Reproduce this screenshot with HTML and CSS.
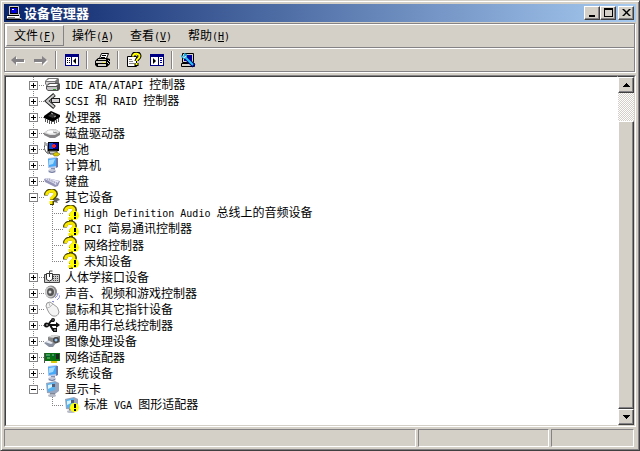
FILE: index.html
```html
<!DOCTYPE html>
<html lang="zh-CN">
<head>
  <meta charset="UTF-8">
  <meta name="viewport" content="width=device-width, initial-scale=1.0">
  <title>设备管理器</title>
  <link rel="stylesheet" href="styles.css">
</head>
<body>

  <!-- icon set, 16x16 -->
  <svg class="sprites" aria-hidden="true">
    <symbol id="i-app" viewBox="0 0 16 16">
      <path d="M3.500 1.500h9v8h-9z" fill="#d4d0c8" stroke="#d4d0c8"/>
      <path d="M4 2h8v7H4z" fill="#000"/><path d="M5 3h6v5H5z" fill="#0000e0"/><path d="M6 4h2v1H6z" fill="#fff"/>
      <path d="M2 10h11v1H2z" fill="#000"/><path d="M1 11h12v2H1z" fill="#fff"/><path d="M1 13h14v1H1z" fill="#848284"/><path d="M0 14h15v1H0z" fill="#000"/>
      <path d="M2 12h7v1H2z" fill="#848284"/><path d="M13.500 9v4l2 1" fill="none" stroke="#d4d0c8"/>
    </symbol>
    <symbol id="i-back" viewBox="0 0 16 16">
      <path d="M2 9l5-4v3h8v3H7v3z" fill="#fff"/>
      <path d="M1 8l5-4v3h8v3H6v3z" fill="#848284"/>
    </symbol>
    <symbol id="i-forward" viewBox="0 0 16 16">
      <path d="M15 9l-5-4v3H2v3h8v3z" fill="#fff"/>
      <path d="M14 8L9 4v3H1v3h8v3z" fill="#848284"/>
    </symbol>
    <symbol id="i-tree" viewBox="0 0 16 16">
      <path d="M1 2h14v12H1z" fill="#000084"/><path d="M2 5h5v8H2zM8 5h6v8H8z" fill="#fff"/>
      <path d="M3 6h1v1H3zM5 6h1v1H5zM3 8h1v1H3zM5 8h1v1H5zM3 10h1v1H3zM5 10h1v1H5z" fill="#000"/>
      <path d="M12 6v6L9 9z" fill="#000"/>
    </symbol>
    <symbol id="i-pane" viewBox="0 0 16 16">
      <path d="M1 2h14v12H1z" fill="#000084"/><path d="M2 5h7v8H2zM10 5h4v8h-4z" fill="#fff"/>
      <path d="M11 6h2v1h-2zM11 8h2v1h-2zM11 10h2v1h-2z" fill="#000084"/>
      <path d="M4 6v6l3-3z" fill="#000"/>
    </symbol>
    <symbol id="i-print" viewBox="0 0 16 16">
      <path d="M4.500 6.500l2-5h7l-2 5z" fill="#fff" stroke="#000"/>
      <path d="M7 3.500h4M6 5.500h4" stroke="#000"/>
      <path d="M0 9l3-3h9l3 1v5l-3 3H2l-2-2z" fill="#000"/>
      <path d="M3 7h8v1H3zM1 9h10v2H1z" fill="#d4d0c8"/><path d="M3 12h8v2H3z" fill="#d4d0c8"/><path d="M8 10h2v1H8z" fill="#ff0"/>
      <path d="M13 8h1v1h-1zM12 10h1v1h-1zM13 11h1v1h-1zM14 9h1v1h-1z" fill="#d4d0c8"/>
    </symbol>
    <symbol id="i-help" viewBox="0 0 16 16">
      <path d="M1.500 4.500h9v10h-9z" fill="#fff" stroke="#000"/>
      <path d="M3 7.500h3M3 9.500h4M3 11.500h5" stroke="#848284"/>
      <path d="M7 4.500C7 0 13.500 0 13.500 4c0 3-3 2.500-3 5M10.500 11v3" fill="none" stroke="#000" stroke-width="4"/>
      <path d="M7 4.500C7 1 13.500 1 13.500 4c0 3-3 2.500-3 5M10.500 11v2" fill="none" stroke="#ff0" stroke-width="2"/>
    </symbol>
    <symbol id="i-scan" viewBox="0 0 16 16">
      <path d="M2.500 1.500h11v9h-11z" fill="#d4d0c8" stroke="#000"/><path d="M4 3h8v6H4z" fill="#0000a0"/>
      <path d="M1.500 11.500h13v3h-13z" fill="#d4d0c8" stroke="#000"/>
      <path d="M4 4l10 10" stroke="#000084" stroke-width="4"/>
      <path d="M4 4l9 9" stroke="#20c8f8" stroke-width="2"/><path d="M1 3l3 1V1l3 1v4L4 7 1 5z" fill="#20a8d8"/><path d="M2 4l2 1 2-1v1L4 6z" fill="#fff"/>
    </symbol>
    <symbol id="i-ide" viewBox="0 0 16 16">
      <path d="M1 4l3-3h10l1 1v5l-2 2H3L1 7z" fill="#777"/><path d="M2 4l3-2h8l-2 2z" fill="#fff"/><path d="M2 5h9v3H3L2 7z" fill="#d6d3d6"/>
      <path d="M2 9l3-3h10l1 1v5l-2 2H4l-2-2z" fill="#555"/><path d="M3 9l3-2h8l-2 2z" fill="#fff"/><path d="M3 10h10v3H4l-1-1z" fill="#c6c3c6"/><path d="M9 12h3v1H9z" fill="#393"/>
    </symbol>
    <symbol id="i-scsi" viewBox="0 0 16 16">
      <path d="M10.500 1.500L3 8l7.500 6.500" fill="none" stroke="#222" stroke-width="4"/>
      <path d="M10 2L3 8l7 6" fill="none" stroke="#ccc" stroke-width="2"/>
      <path d="M7 5h9v5H7z" fill="#222"/><path d="M8 6h7v3H8z" fill="#d6d3d6"/>
    </symbol>
    <symbol id="i-cpu" viewBox="0 0 16 16">
      <path d="M0 7l7-5 9 4v2l-7 5-9-4z" fill="#000"/>
      <path d="M1.500 9v4M3.500 10v4M5.500 11v4M7.500 12v3M10.500 12v3M12.500 11v3M14.500 9v4" stroke="#555"/>
      <path d="M4 7l4-3 4 2-3 3z" fill="#333"/><path d="M7 4l2 1M10 8l2-1" stroke="#aaa"/>
    </symbol>
    <symbol id="i-disk" viewBox="0 0 16 16">
      <path d="M0 8l4-3 7-1 5 3v3l-5 3H6L0 10z" fill="#848284"/>
      <path d="M0 8l4-3 7-1 5 3-5 3H6z" fill="#ddd"/><ellipse cx="7" cy="7" rx="4" ry="1.500" fill="#fff"/><path d="M9 7l4 1" stroke="#888"/>
    </symbol>
    <symbol id="i-battery" viewBox="0 0 16 16">
      <path d="M1 1v3l-1 3 2 4 3 2M3 2v3" fill="none" stroke="#555"/>
      <path d="M3 4h3v9H3z" fill="#888"/><path d="M4 1h11v9H4z" fill="#000"/><path d="M5 2h4v6H5z" fill="#1050d0"/><path d="M9 2h5v6H9z" fill="#0000a0"/>
      <path d="M9 3h2v1h1v2h-1v1H9V6H8V4h1z" fill="#f02020"/>
      <path d="M5 10h8v3H6z" fill="#ccc" stroke="#444"/>
      <path d="M9 13l3-2 4 2-2 2h-4z" fill="#d8c800" stroke="#665c00" stroke-width=".5"/>
    </symbol>
    <symbol id="i-computer" viewBox="0 0 16 16">
      <path d="M4 1l9-1 1 9-4 3-6-1z" fill="#b8c8e8"/><path d="M4 2l8-1v8l-7 1z" fill="#48a8f8"/><path d="M5 3l6-1-2 5-4 1z" fill="#a8dcff"/>
      <path d="M12 1l2 0v9l-2 1z" fill="#6878a8"/>
      <path d="M7 11h4v2H7z" fill="#8890b0"/><ellipse cx="8" cy="14" rx="4" ry="2" fill="#c4c8d8"/><path d="M5 14.500q3 2 6 0" stroke="#7078a0" fill="none"/>
    </symbol>
    <symbol id="i-keyboard" viewBox="0 0 16 16">
      <path d="M0 6l3-1 13 3-2 5-3 1L1 9z" fill="#9494b8"/><path d="M1 6l2-1 12 3-3 4z" fill="#e8e8f8"/>
      <path d="M3 6l10 5M5 6l8 4M4 8l6 3" stroke="#9090b0" stroke-dasharray="1 1"/>
    </symbol>
    <symbol id="i-unknown" viewBox="0 0 16 16">
      <path d="M9 8l5 1 2 2-3 1 1 2-4-1z" fill="#666"/>
      <path d="M2 6.500C2 0 12 0 12 5c0 3-4 3-4 6M8 12v4" fill="none" stroke="#4a4400" stroke-width="4"/>
      <path d="M2.500 6C3 1 11 1 11 5c0 3-4 3-4 5.500M7 12v3" fill="none" stroke="#f8e800" stroke-width="3"/>
    </symbol>
    <symbol id="i-badge" viewBox="0 0 16 16">
      <circle cx="11.500" cy="10.500" r="4.500" fill="#ff0"/><path d="M11 7h2v4h-2zM11 12h2v2h-2z" fill="#000"/>
    </symbol>
    <symbol id="i-unknown-warn" viewBox="0 0 16 16">
      <use href="#i-unknown"/><use href="#i-badge"/>
    </symbol>
    <symbol id="i-hid" viewBox="0 0 16 16">
      <path d="M.5 5.500h15v8H.5z" fill="#ccc" stroke="#444"/><path d="M9 7.500h5M9 9.500h5M9 11.500h5" stroke="#444" stroke-dasharray="1 1"/>
      <path d="M5.500 5V2h3" fill="none" stroke="#444"/><path d="M2.500 4.500h6v6q-3 3-6 0z" fill="#fff" stroke="#333"/><path d="M5 5h1v3H5z" fill="#333"/>
    </symbol>
    <symbol id="i-sound" viewBox="0 0 16 16">
      <ellipse cx="7" cy="7" rx="6" ry="6.500" fill="#888"/><ellipse cx="6" cy="7" rx="5" ry="5.500" fill="#ccc"/><ellipse cx="6.500" cy="7" rx="3.500" ry="4" fill="#555"/><circle cx="6" cy="7" r="1.500" fill="#ddd"/>
      <path d="M11 13q3-2 3-5M13 15q3-2 3-5" fill="none" stroke="#8c94e8"/>
    </symbol>
    <symbol id="i-mouse" viewBox="0 0 16 16">
      <path d="M2 5q0-4 4-4l3 2q6 3 6 8-1 5-6 4Q5 14 2 5z" fill="#f4f4f4" stroke="#999"/>
      <path d="M3 7q3 0 6-4M6 5l-1-3" fill="none" stroke="#bbb"/><path d="M8 0l2 1" stroke="#66c"/>
    </symbol>
    <symbol id="i-usb" viewBox="0 0 16 16">
      <path d="M1 8h13M4 8l3-4h3M6 8l3 5h2" fill="none" stroke="#111" stroke-width="2"/>
      <circle cx="2.500" cy="8" r="2.500" fill="#111"/><path d="M12 5l4 3-4 3z" fill="#111"/><circle cx="9" cy="3" r="2" fill="#111"/><path d="M9 11h4v4H9z" fill="#111"/>
      <path d="M2 8h2M10 13h2M8.500 3h1" stroke="#ccc"/>
    </symbol>
    <symbol id="i-imaging" viewBox="0 0 16 16">
      <path d="M0 10l5-3 7 3-3 4H5z" fill="#8890a0"/><path d="M1 9l5-2 5 2-4 2z" fill="#e8ecf4"/>
      <path d="M4 4l5-2 7 1v6l-5 2-7-4z" fill="#888"/><path d="M4 4l5-2 6 1-5 2z" fill="#ddd"/><circle cx="12" cy="7" r="3" fill="#444"/><circle cx="12" cy="7" r="1.500" fill="#9cf"/>
    </symbol>
    <symbol id="i-network" viewBox="0 0 16 16">
      <path d="M0 4h1v10H0z" fill="#555"/><path d="M1 4h15v8H1z" fill="#087010"/><path d="M2 5h4v3H2zM8 5h3v3H8z" fill="#063"/>
      <path d="M2 6h4M3 9h3M8 6h2M12 7h3M12 9h3" stroke="#8c8"/><path d="M12 5h3v5h-3z" fill="#222"/><path d="M7 12h6v2H7z" fill="#dcc800"/>
    </symbol>
    <symbol id="i-display" viewBox="0 0 16 16">
      <path d="M2 2l9-2 4 2v8l-4 3-8-1z" fill="#98a4bc"/><path d="M3 3l8-2v8l-7 2z" fill="#58b4f0"/><path d="M4 4l5-1-1 3-4 2z" fill="#d8f4ff"/>
      <path d="M8 3h3v3H8z" fill="#50607c"/><path d="M6 12h5v2H6z" fill="#808898"/><ellipse cx="8" cy="14.500" rx="4" ry="1.500" fill="#b8bcc8"/>
    </symbol>
    <symbol id="i-display-warn" viewBox="0 0 16 16">
      <use href="#i-display"/><use href="#i-badge"/>
    </symbol>
  </svg>

  <div class="window">
    <header class="titlebar">
      <svg class="icon"><use href="#i-app"/></svg>
      <h1>设备管理器</h1>
      <div class="captions">
        <button type="button" class="raised" aria-label="最小化"><svg viewBox="0 0 11 10"><path d="M2 7h6v2H2z"/></svg></button>
        <button type="button" class="raised" aria-label="最大化"><svg viewBox="0 0 11 10"><path d="M1 0h9v9H1zM2 2v6h7V2z" fill-rule="evenodd"/></svg></button>
        <button type="button" class="raised close" aria-label="关闭"><svg viewBox="0 0 11 10"><path d="M1 1h2l2.500 2.500L8 1h2L6.500 4.500 10 8H8L5.500 5.500 3 8H1l3.500-3.500z"/></svg></button>
      </div>
    </header>

    <div class="bars">
      <nav class="menubar">
        <button type="button" class="active">文件<span class="en">(<u>F</u>)</span></button>
        <button type="button">操作<span class="en">(<u>A</u>)</span></button>
        <button type="button">查看<span class="en">(<u>V</u>)</span></button>
        <button type="button">帮助<span class="en">(<u>H</u>)</span></button>
      </nav>
      <div class="toolbar">
        <button type="button" aria-label="后退" disabled><svg class="icon"><use href="#i-back"/></svg></button>
        <button type="button" aria-label="前进" disabled><svg class="icon"><use href="#i-forward"/></svg></button>
        <span class="sep"></span>
        <button type="button" aria-label="显示/隐藏控制台树"><svg class="icon"><use href="#i-tree"/></svg></button>
        <span class="sep"></span>
        <button type="button" aria-label="打印"><svg class="icon"><use href="#i-print"/></svg></button>
        <span class="sep"></span>
        <button type="button" aria-label="帮助"><svg class="icon"><use href="#i-help"/></svg></button>
        <button type="button" aria-label="显示/隐藏操作窗格"><svg class="icon"><use href="#i-pane"/></svg></button>
        <span class="sep"></span>
        <button type="button" aria-label="扫描检测硬件改动"><svg class="icon"><use href="#i-scan"/></svg></button>
      </div>
    </div>

    <main class="panel">
      <ul class="tree">
        <li><div class="row"><button type="button" class="toggle plus" aria-label="展开"></button><svg class="icon"><use href="#i-ide"/></svg><span><span class="en">IDE ATA/ATAPI </span>控制器</span></div></li>
        <li><div class="row"><button type="button" class="toggle plus" aria-label="展开"></button><svg class="icon"><use href="#i-scsi"/></svg><span><span class="en">SCSI </span>和<span class="en"> RAID </span>控制器</span></div></li>
        <li><div class="row"><button type="button" class="toggle plus" aria-label="展开"></button><svg class="icon"><use href="#i-cpu"/></svg><span>处理器</span></div></li>
        <li><div class="row"><button type="button" class="toggle plus" aria-label="展开"></button><svg class="icon"><use href="#i-disk"/></svg><span>磁盘驱动器</span></div></li>
        <li><div class="row"><button type="button" class="toggle plus" aria-label="展开"></button><svg class="icon"><use href="#i-battery"/></svg><span>电池</span></div></li>
        <li><div class="row"><button type="button" class="toggle plus" aria-label="展开"></button><svg class="icon"><use href="#i-computer"/></svg><span>计算机</span></div></li>
        <li><div class="row"><button type="button" class="toggle plus" aria-label="展开"></button><svg class="icon"><use href="#i-keyboard"/></svg><span>键盘</span></div></li>
        <li>
          <div class="row"><button type="button" class="toggle" aria-label="折叠"></button><svg class="icon"><use href="#i-unknown"/></svg><span>其它设备</span></div>
          <ul>
            <li><div class="row"><svg class="icon"><use href="#i-unknown-warn"/></svg><span><span class="en">High Definition Audio </span>总线上的音频设备</span></div></li>
            <li><div class="row"><svg class="icon"><use href="#i-unknown-warn"/></svg><span><span class="en">PCI </span>简易通讯控制器</span></div></li>
            <li><div class="row"><svg class="icon"><use href="#i-unknown-warn"/></svg><span>网络控制器</span></div></li>
            <li><div class="row"><svg class="icon"><use href="#i-unknown-warn"/></svg><span>未知设备</span></div></li>
          </ul>
        </li>
        <li><div class="row"><button type="button" class="toggle plus" aria-label="展开"></button><svg class="icon"><use href="#i-hid"/></svg><span>人体学接口设备</span></div></li>
        <li><div class="row"><button type="button" class="toggle plus" aria-label="展开"></button><svg class="icon"><use href="#i-sound"/></svg><span>声音、视频和游戏控制器</span></div></li>
        <li><div class="row"><button type="button" class="toggle plus" aria-label="展开"></button><svg class="icon"><use href="#i-mouse"/></svg><span>鼠标和其它指针设备</span></div></li>
        <li><div class="row"><button type="button" class="toggle plus" aria-label="展开"></button><svg class="icon"><use href="#i-usb"/></svg><span>通用串行总线控制器</span></div></li>
        <li><div class="row"><button type="button" class="toggle plus" aria-label="展开"></button><svg class="icon"><use href="#i-imaging"/></svg><span>图像处理设备</span></div></li>
        <li><div class="row"><button type="button" class="toggle plus" aria-label="展开"></button><svg class="icon"><use href="#i-network"/></svg><span>网络适配器</span></div></li>
        <li><div class="row"><button type="button" class="toggle plus" aria-label="展开"></button><svg class="icon"><use href="#i-computer"/></svg><span>系统设备</span></div></li>
        <li>
          <div class="row"><button type="button" class="toggle" aria-label="折叠"></button><svg class="icon"><use href="#i-display"/></svg><span>显示卡</span></div>
          <ul>
            <li><div class="row"><svg class="icon"><use href="#i-display-warn"/></svg><span>标准<span class="en"> VGA </span>图形适配器</span></div></li>
          </ul>
        </li>
      </ul>

      <div class="scrollbar">
        <button type="button" class="raised" aria-label="向上滚动"><svg viewBox="0 0 7 4"><path d="M3 0h1v1h1v1h1v1h1v1H0V3h1V2h1V1h1z"/></svg></button>
        <div class="track"><div class="thumb raised"></div></div>
        <button type="button" class="raised" aria-label="向下滚动"><svg viewBox="0 0 7 4"><path d="M0 0h7v1H6v1H5v1H4v1H3V3H2V2H1V1H0z"/></svg></button>
      </div>
    </main>

    <footer class="statusbar">
      <div class="cell"></div>
      <div class="cell mid"></div>
      <div class="cell end"></div>
    </footer>
  </div>

</body>
</html>
```

FILE: styles.css
```css
:root {
  --face: #d4d0c8;
  --shadow: #848284;
  --dark: #404040;
}

* {
  box-sizing: border-box;
}

body {
  margin: 0;
  font-family: "Noto Sans CJK SC", sans-serif;
  font-size: 12px;
  line-height: 16px;
  color: #000;
}

button {
  padding: 0;
  border: 0;
  background: none;
  font: inherit;
  color: inherit;
}

.sprites {
  position: absolute;
  width: 0;
  height: 0;
}

.icon {
  flex: none;
  width: 16px;
  height: 16px;
}

.en {
  font-family: "DejaVu Sans Mono", monospace;
  font-size: 10px;
  white-space: pre;
}

.raised {
  background: var(--face);
  border: 1px solid;
  border-color: #fff var(--dark) var(--dark) #fff;
  box-shadow: inset -1px -1px var(--shadow);
}

.window {
  display: flex;
  flex-direction: column;
  height: 100vh;
  padding: 3px;
  background: var(--face);
  border: 1px solid;
  border-color: var(--face) var(--dark) var(--dark) var(--face);
  box-shadow: inset 1px 1px #fff, inset -1px -1px var(--shadow);
}

/* title bar */
.titlebar {
  display: flex;
  align-items: center;
  height: 18px;
  padding: 0 2px;
  background: linear-gradient(to right, #0a246a, #a6caf0);
  color: #fff;
}

.titlebar h1 {
  flex: 1;
  margin: 0 0 0 2px;
  font-size: 13px;
  line-height: 18px;
}

.captions {
  display: flex;
}

.captions button {
  display: flex;
  justify-content: center;
  width: 16px;
  height: 14px;
}

.captions .close {
  margin-left: 2px;
}

.captions svg {
  width: 11px;
  height: 10px;
  margin-top: 1px;
}

/* menu + toolbar */
.bars {
  margin: 1px 1px 3px 0;
  border: 1px solid var(--shadow);
  box-shadow: 1px 1px #fff, inset 1px 1px #fff;
}

.menubar {
  display: flex;
  height: 24px;
  padding: 1px;
  border-bottom: 1px solid var(--shadow);
}

.menubar button {
  width: 58px;
  border: 1px solid transparent;
}

.menubar .active {
  border-color: #fff var(--shadow) var(--shadow) #fff;
}

.toolbar {
  display: flex;
  align-items: center;
  height: 23px;
  padding-left: 1px;
  border-top: 1px solid #fff;
}

.toolbar button {
  display: flex;
  align-items: center;
  justify-content: center;
  width: 23px;
  height: 22px;
}

.sep {
  width: 2px;
  height: 18px;
  margin: 0 3px;
  border-left: 1px solid var(--shadow);
  border-right: 1px solid #fff;
}

/* device tree */
.panel {
  display: flex;
  flex: 1;
  min-height: 0;
  background: #fff;
  border: 1px solid;
  border-color: var(--shadow) #fff #fff var(--shadow);
}

.tree {
  flex: 1;
  overflow: hidden;
  margin: 0;
  padding: 0 0 0 23px;
  list-style: none;
  border: 1px solid;
  border-color: var(--dark) transparent var(--face) var(--dark);
}

.tree ul {
  margin: 0;
  padding: 0 0 0 19px;
  list-style: none;
}

.tree li {
  background: repeating-linear-gradient(#848284 0 1px, transparent 1px 2px) 4px 0 / 1px 100% no-repeat;
}

.tree > li:last-child,
.tree ul li:last-child {
  background-size: 1px 8px;
}

.row {
  display: flex;
  align-items: center;
  height: 16px;
  padding-left: 15px;
  white-space: nowrap;
  background: repeating-linear-gradient(to right, #848284 0 1px, transparent 1px 2px) 4px 8px / 11px 1px no-repeat;
}

.row .icon {
  margin-right: 5px;
}

.toggle {
  width: 9px;
  height: 9px;
  margin: 0 6px 0 -15px;
  border: 1px solid var(--shadow);
  background: linear-gradient(#000, #000) center / 5px 1px no-repeat, #fff;
}

.toggle.plus {
  background: linear-gradient(#000, #000) center / 5px 1px no-repeat, linear-gradient(#000, #000) center / 1px 5px no-repeat, #fff;
}

/* scroll bar */
.scrollbar {
  display: flex;
  flex-direction: column;
  width: 17px;
  border: 1px solid;
  border-color: var(--dark) var(--face) var(--face);
  border-left: 0;
}

.scrollbar button {
  display: flex;
  flex: none;
  align-items: center;
  justify-content: center;
  height: 16px;
}

.scrollbar svg {
  width: 7px;
  height: 4px;
}

.track {
  display: flex;
  flex: 1;
  align-items: flex-end;
  background: repeating-conic-gradient(#fff 0 25%, var(--face) 0 50%) 0 0 / 2px 2px;
}

.thumb {
  width: 100%;
  height: 91%;
}

/* status bar */
.statusbar {
  display: flex;
  gap: 2px;
  padding: 2px 2px 0 0;
}

.cell {
  flex: 1;
  height: 18px;
  border: 1px solid;
  border-color: var(--shadow) #fff #fff var(--shadow);
}

.cell.mid {
  flex: 0 0 131px;
}

.cell.end {
  flex: 0 0 83px;
}
```
